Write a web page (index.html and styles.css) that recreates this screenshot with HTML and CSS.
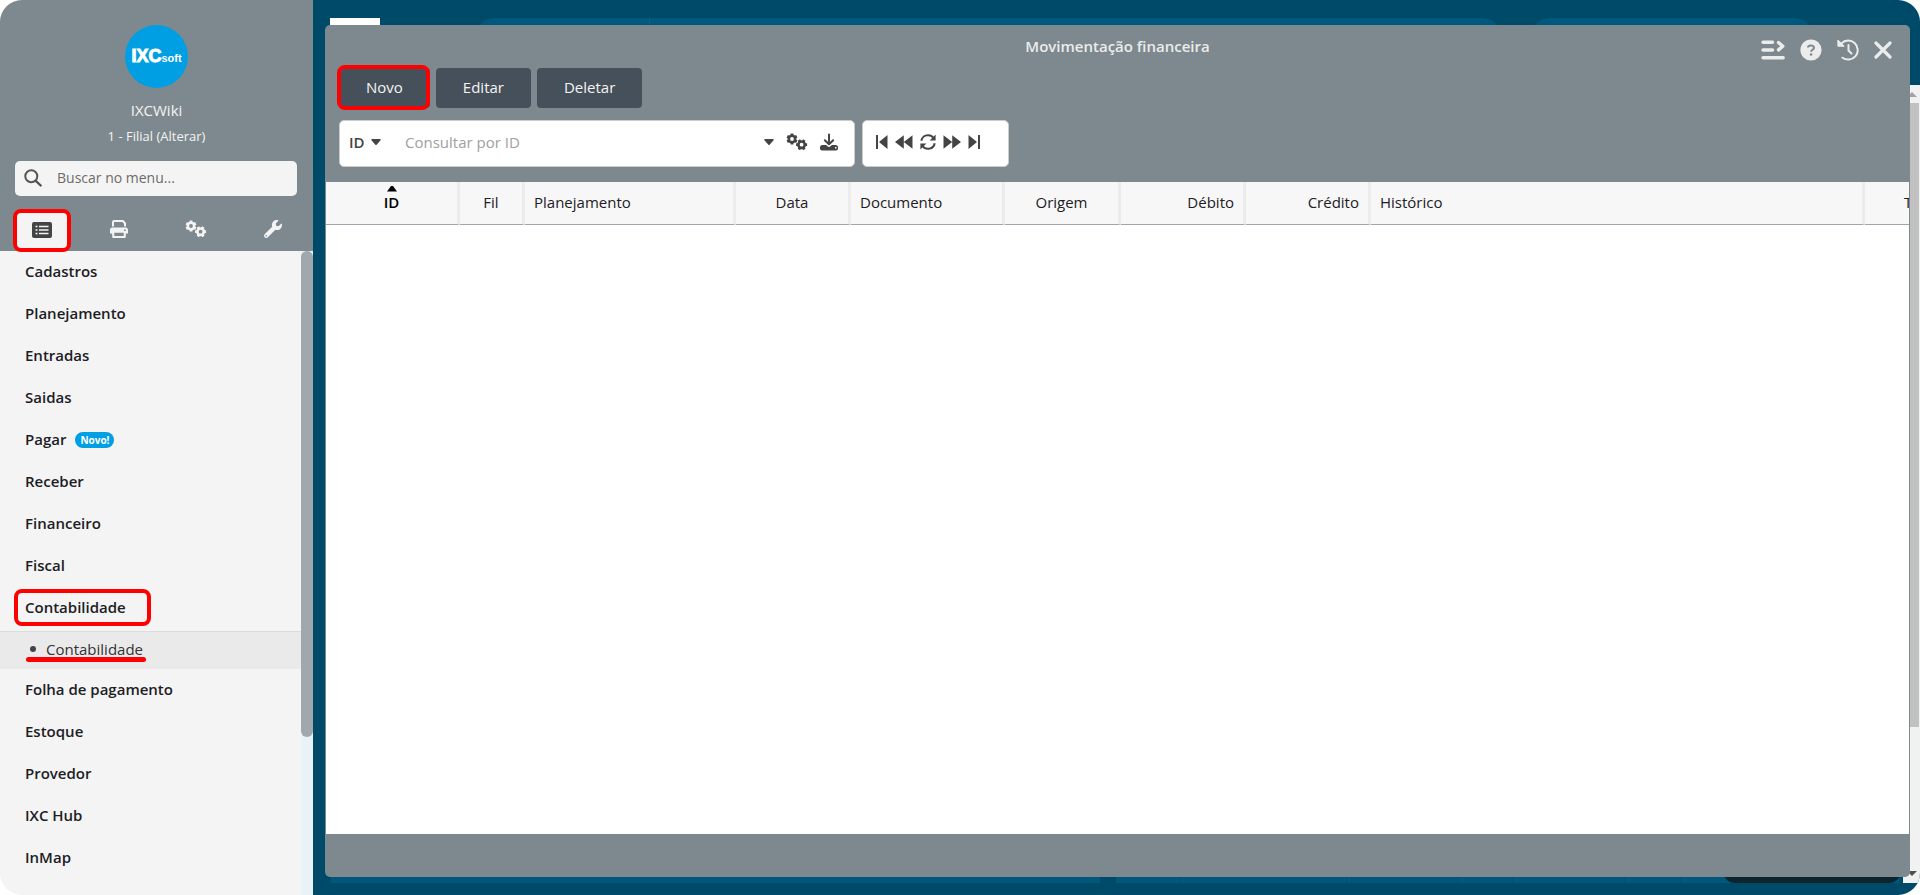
FILE: index.html
```html
<!DOCTYPE html>
<html lang="pt-BR">
<head>
<meta charset="utf-8">
<title>Movimentação financeira</title>
<link rel="stylesheet" href="styles.css">
</head>
<body>
<svg class="defs" aria-hidden="true">
  <symbol id="gears" viewBox="0 0 22 18">
    <g fill="none" stroke="currentColor">
      <circle cx="6" cy="6" r="3.2" stroke-width="2.6"/>
      <path stroke-width="2.8" d="M6 0.5v2M6 9.500v2M1.240 3.250l1.730 1M9.030 7.750l1.730 1M10.760 3.250l-1.730 1M2.970 7.750l-1.730 1"/>
      <circle cx="15.600" cy="11.700" r="3.200" stroke-width="2.6"/>
      <path stroke-width="2.8" d="M10.100 11.700h2M19.100 11.700h2M12.850 6.940l1 1.730M17.350 14.730l1 1.730M18.350 6.940l-1 1.730M13.850 14.730l-1 1.730"/>
    </g>
  </symbol>
  <symbol id="caret" viewBox="0 0 10 6"><path fill="currentColor" d="M1 0h8a.8.8 0 0 1 .6 1.300L5.600 5.700a.8.8 0 0 1-1.200 0L.4 1.300A.8.800 0 0 1 1 0z"/></symbol>
</svg>
<div class="app">
  <aside class="sidebar">
    <header class="profile">
      <div class="logo"><span class="logo-main">IXC</span><span class="logo-sub">soft</span></div>
      <div class="company">IXCWiki</div>
      <a class="branch" href="#">1 - Filial (Alterar)</a>
      <label class="menu-search">
        <svg class="icon-search" viewBox="0 0 18 18" fill="none" stroke="currentColor" stroke-linecap="round"><circle cx="7.300" cy="7.300" r="6" stroke-width="2"/><path d="M11.800 11.800l4.900 4.700" stroke-width="2.400"/></svg>
        <input type="text" placeholder="Buscar no menu..." aria-label="Buscar no menu">
      </label>
      <nav class="tabs">
        <button class="tab active" aria-label="Menu"><svg width="20" height="16" viewBox="0 0 20 16"><rect width="20" height="16" rx="2" fill="currentColor"/><path d="M3.500 4.500h2M3.500 8h2M3.500 11.500h2M7 4.500h9.500M7 8h9.500M7 11.500h9.500" stroke="#f4f4f4" stroke-width="1.600"/></svg></button>
        <button class="tab" aria-label="Imprimir"><svg width="18" height="18" viewBox="0 0 18 18"><path fill="none" stroke="currentColor" stroke-width="2" d="M3 6.500V2.200A1.200 1.200 0 0 1 4.200 1h8.600L15 3.200v3.300"/><path fill="currentColor" fill-rule="evenodd" d="M2.500 7.500h13A2.500 2.500 0 0 1 18 10v3.500h-2.200v3A1.300 1.300 0 0 1 14.500 18h-11a1.300 1.300 0 0 1-1.300-1.500v-3H0V10a2.500 2.500 0 0 1 2.500-2.500zM4.300 12.700v3.200h9.400v-3.200zM14 9.500v1.500h1.700V9.500z"/></svg></button>
        <button class="tab" aria-label="Configurações"><svg width="22" height="18"><use href="#gears"/></svg></button>
        <button class="tab" aria-label="Ferramentas"><svg width="18" height="18" viewBox="0 0 512 512"><path fill="currentColor" d="M507.700 109.100c-2.200-9-13.500-12.100-20.100-5.500l-74.400 74.400-67.900-11.300L334 98.900l74.400-74.400c6.600-6.600 3.400-17.900-5.700-20.200-47.400-11.700-99.600.9-136.600 37.900-39.600 39.600-50.500 97.100-34.100 147.200L18.700 402.800c-25 25-25 65.500 0 90.500s65.500 25 90.500 0l213.200-213.200c50.100 16.700 107.500 5.700 147.400-34.200 37.100-37.100 49.700-89.300 37.900-136.800zM64 472c-13.200 0-24-10.800-24-24s10.700-24 24-24 24 10.700 24 24-10.700 24-24 24z"/></svg></button>
      </nav>
    </header>
    <div class="menu-area">
      <ul class="menu">
        <li><a href="#">Cadastros</a></li>
        <li><a href="#">Planejamento</a></li>
        <li><a href="#">Entradas</a></li>
        <li><a href="#">Saidas</a></li>
        <li><a href="#">Pagar<span class="badge">Novo!</span></a></li>
        <li><a href="#">Receber</a></li>
        <li><a href="#">Financeiro</a></li>
        <li><a href="#">Fiscal</a></li>
        <li><a class="marked" href="#">Contabilidade</a>
          <ul class="submenu"><li><a href="#">Contabilidade</a></li></ul>
        </li>
        <li><a href="#">Folha de pagamento</a></li>
        <li><a href="#">Estoque</a></li>
        <li><a href="#">Provedor</a></li>
        <li><a href="#">IXC Hub</a></li>
        <li><a href="#">InMap</a></li>
      </ul>
      <div class="menu-scroll"><div class="menu-thumb"></div></div>
    </div>
  </aside>

  <main class="workspace">
    <div class="backdrop">
      <div class="back-top">
        <div class="back-logo"></div>
        <div class="back-pill wide"></div>
        <div class="back-pill"></div>
      </div>
      <div class="back-bottom">
        <div class="back-panel"></div>
        <div class="back-grid"><i></i><i></i><i></i><i></i><i></i><i></i><i></i></div>
      </div>
    </div>
    <div class="back-toast"></div>
    <div class="page-scroll">
      <svg width="10" height="5" viewBox="0 0 10 5"><path fill="#a3a3a3" d="M0 5l5-5 5 5z"/></svg>
      <div class="page-thumb"></div>
      <svg width="10" height="5" viewBox="0 0 10 5"><path fill="#505050" d="M0 0h10L5 5z"/></svg>
    </div>

    <section class="window">
      <header class="window-head">
        <div class="title-bar">
          <h1>Movimentação financeira</h1>
          <div class="window-actions">
            <button aria-label="Alternar"><svg width="24" height="20" viewBox="0 0 24 20" fill="none" stroke="currentColor" stroke-width="3.400" stroke-linecap="round" stroke-linejoin="round"><path d="M2 2.300h9.500M2 10h9.500M2 17.700h20.200M17.500 2.500l4.300 3.700-4.300 3.700"/></svg></button>
            <button aria-label="Ajuda"><svg width="22" height="22" viewBox="0 0 22 22"><circle cx="11" cy="11" r="10.600" fill="currentColor"/><path fill="none" stroke="#7d898e" stroke-width="2" d="M8 8.500C8 6 14 5.500 14 8.700c0 2-2.900 2-2.900 4"/><circle cx="11.100" cy="15.500" r="1.300" fill="#7d898e"/></svg></button>
            <button aria-label="Histórico"><svg width="22" height="22" viewBox="0 0 22 22"><path fill="none" stroke="currentColor" stroke-width="2" stroke-linecap="round" d="M4.500 4.400A9.500 9.500 0 1 1 5.500 18.700"/><path fill="currentColor" d="M.9 1v6.200h6.300z" stroke="currentColor" stroke-linejoin="round"/><path fill="none" stroke="currentColor" stroke-width="2" stroke-linecap="round" d="M11.500 6v5.500l3 3"/></svg></button>
            <button aria-label="Fechar"><svg width="18" height="18" viewBox="0 0 18 18"><path fill="none" stroke="currentColor" stroke-width="3.200" stroke-linecap="round" d="M2 2l14 14M16 2L2 16"/></svg></button>
          </div>
        </div>
        <div class="commands">
          <button class="marked">Novo</button>
          <button>Editar</button>
          <button>Deletar</button>
        </div>
        <div class="toolbar">
          <div class="query">
            <label class="field"><select aria-label="Campo"><option>ID</option></select><svg width="10" height="6"><use href="#caret"/></svg></label>
            <input type="text" placeholder="Consultar por ID" aria-label="Consultar por ID">
            <div class="query-actions">
              <button aria-label="Mais"><svg width="10" height="6"><use href="#caret"/></svg></button>
              <button aria-label="Configurar"><svg width="22" height="18"><use href="#gears"/></svg></button>
              <button aria-label="Exportar"><svg width="18" height="18" viewBox="0 0 18 18"><path fill="none" stroke="currentColor" stroke-width="2" stroke-linecap="round" stroke-linejoin="round" d="M9 1.500v9M4.800 7.200L9 11.300l4.200-4.100"/><path fill="currentColor" fill-rule="evenodd" d="M2.500 12H6l3 2.300 3-2.300h3.500a2.500 2.500 0 0 1 2.500 2.500v1a2 2 0 0 1-2 2H2a2 2 0 0 1-2-2v-1A2.500 2.500 0 0 1 2.500 12zM15 14v1.500h1.500V14z"/></svg></button>
            </div>
          </div>
          <div class="pager">
            <button aria-label="Primeiro"><svg width="12" height="14" viewBox="0 0 12 14" fill="currentColor"><path d="M0 0h2v14H0zM11.500 0v14L3 7z"/></svg></button>
            <button aria-label="Anterior"><svg width="18" height="14" viewBox="0 0 18 14" fill="currentColor"><path d="M8.800.3v13.400L0 7zM17.500.3v13.400L8.800 7z"/></svg></button>
            <button aria-label="Atualizar"><svg width="16" height="16" viewBox="0 0 16 16" fill="none" stroke="currentColor" stroke-width="2"><path d="M1.300 6.800A6.800 6.800 0 0 1 13.500 4M14.700 9.200A6.800 6.800 0 0 1 2.500 12"/><path stroke="none" fill="currentColor" d="M15.600.5v6h-6zM.4 15.500v-6h6z"/></svg></button>
            <button aria-label="Próximo"><svg width="18" height="14" viewBox="0 0 18 14" fill="currentColor"><path d="M.5.3v13.400L9.200 7zM9.200.3v13.400L18 7z"/></svg></button>
            <button aria-label="Último"><svg width="12" height="14" viewBox="0 0 12 14" fill="currentColor"><path d="M10 0h2v14h-2zM.5 0v14L9 7z"/></svg></button>
          </div>
        </div>
      </header>
      <div class="grid">
        <table>
          <colgroup><col class="c-id"><col class="c-fil"><col class="c-plan"><col class="c-data"><col class="c-doc"><col class="c-orig"><col class="c-val"><col class="c-val"><col><col class="c-last"></colgroup>
          <thead>
            <tr>
              <th class="center sorted"><svg class="sort" width="10" height="6" viewBox="0 0 10 6"><path d="M0 5.500L4 0h2l4 5.500z"/></svg>ID</th>
              <th class="center">Fil</th>
              <th>Planejamento</th>
              <th class="center">Data</th>
              <th>Documento</th>
              <th class="center">Origem</th>
              <th class="right">Débito</th>
              <th class="right">Crédito</th>
              <th>Histórico</th>
              <th class="cut">T</th>
            </tr>
          </thead>
        </table>
      </div>
      <footer class="window-foot"></footer>
    </section>
  </main>
</div>
</body>
</html>
```
FILE: styles.css
```css
*, *::before, *::after { box-sizing: border-box; }
body { margin: 0; background: #fff; color: #1c2024; font: 15px/20px "Open Sans", "Noto Sans", sans-serif; }
button, input, select { font: inherit; color: inherit; border: 0; padding: 0; margin: 0; background: none; outline: 0; }
button { cursor: pointer; display: flex; align-items: center; justify-content: center; }
a { color: inherit; text-decoration: none; }
ul { list-style: none; margin: 0; padding: 0; }
svg { display: block; flex: none; }
.defs { position: absolute; width: 0; height: 0; }

.app { display: flex; height: 100vh; border-radius: 22px; overflow: hidden; }

/* Sidebar */
.sidebar { width: 313px; flex: none; display: flex; flex-direction: column; background: #f4f4f4; }
.profile { background: #7d898e; color: #f4f4f4; padding: 25px 15px 0; display: flex; flex-direction: column; align-items: center; }
.logo { width: 63px; height: 63px; border-radius: 50%; background: #009fe3; color: #fff; display: flex; align-items: baseline; justify-content: center; font-family: "Liberation Sans", Arial, sans-serif; font-weight: 700; line-height: 63px; }
.logo-main { font-size: 18px; -webkit-text-stroke: 1px #fff; }
.logo-sub { font-size: 11px; }
.company { margin-top: 12px; }
.branch { margin-top: 6px; font-size: 13px; }
.menu-search { align-self: stretch; margin: 15px 1px 0 0; height: 35px; background: #f4f4f4; border-radius: 5px; display: flex; align-items: center; gap: 15px; padding: 0 9px 2px; color: #555; }
.icon-search { width: 18px; height: 18px; }
.menu-search input { flex: 1; min-width: 0; font-size: 14px; }
.menu-search input::placeholder { color: #6b6b6b; opacity: 1; }
.tabs { align-self: stretch; display: flex; gap: 19px; margin: 13px -2px 0; height: 42px; }
.tab { flex: none; width: 58px; height: 43px; padding-bottom: 3px; }
.tab.active { position: relative; z-index: 1; background: #f4f4f4; color: #444; border: 4px solid #f00; border-radius: 8px; padding: 0 0 2px; }

.menu-area { flex: 1; min-height: 0; display: flex; }
.menu { flex: 1; font-weight: 600; overflow: hidden; }
.menu > li > a { display: flex; align-items: center; height: 42px; padding: 0 25px 2px; }
.badge { margin: 2px 0 0 9px; padding: 0 5px; border-radius: 8px; background: #009fe3; color: #fff; font-size: 10px; font-weight: 700; line-height: 16px; }
.menu > li > a.marked { position: relative; }
.menu > li > a.marked::before { content: ""; position: absolute; left: 14px; top: 2px; width: 137px; height: 37px; border: 4px solid #f00; border-radius: 8px; }
.submenu { margin-top: 2px; background: #eaeaea; border-top: 1px solid #dcdcdc; font-weight: 400; }
.submenu a { position: relative; display: flex; align-items: center; gap: 10px; height: 37px; padding: 0 30px 3px; color: #333; }
.submenu a::before { content: ""; width: 6px; height: 6px; border-radius: 50%; background: #444; }
.submenu a::after { content: ""; position: absolute; left: 26px; top: 25px; width: 120px; height: 5px; border-radius: 3px; background: #f00; }
.menu-scroll { width: 12px; background: #e8f2f7; }
.menu-thumb { height: 75.5%; background: #a0a8ae; border-radius: 6px; }

/* Page behind the window */
.workspace { flex: 1; min-width: 0; position: relative; background: #004a69; }
.backdrop { height: 100%; display: flex; flex-direction: column; justify-content: space-between; padding: 18px 20px 12px 17px; }
.back-top { display: flex; height: 40px; padding-right: 86px; }
.back-logo { width: 50px; background: #fff; margin-right: 95px; }
.back-pill { flex: 283; border-radius: 20px; background: #00587d; }
.back-pill.wide { flex: 1025; margin-right: 28px; background: linear-gradient(90deg, #00587d 174px, #00638a 174px, #00638a 175px, #00587d 175px); }
.back-bottom { display: flex; gap: 16px; height: 20px; padding-left: 1px; }
.back-panel { flex: 769; background: #00587d; }
.back-grid { flex: 784; display: grid; grid-template-columns: 65fr 166fr 111fr 55fr 112fr 56fr 219fr; background: #00587d; }
.back-grid i { border-right: 1px solid #005073; }
.back-toast { position: absolute; right: 20px; bottom: 12px; width: 176px; height: 30px; border-radius: 10px; background: #0e252e; }
.page-scroll { position: absolute; right: 0; top: 85px; bottom: 12px; width: 17px; background: #f1f1f1; display: flex; flex-direction: column; align-items: center; padding: 7px 0; }
.page-thumb { width: 15px; height: 624px; margin: 6px 0 auto; background: #c1c1c1; }

/* Window */
.window { position: absolute; top: 25px; right: 10px; bottom: 18px; left: 12px; display: flex; flex-direction: column; background: #7d898e; border-radius: 5px; overflow: hidden; }
.window-head { padding: 10px 14px 15px; }
.title-bar { display: grid; grid-template-columns: 1fr auto 1fr; color: #ececec; height: 33px; }
.title-bar h1 { grid-column: 2; margin: 0; font-size: 15px; line-height: 22px; font-weight: 600; }
.window-actions { justify-self: end; display: flex; gap: 15px; align-items: center; height: 30px; padding-right: 4px; }
.commands { display: flex; gap: 6px; }
.commands button { height: 40px; padding: 0 27px 3px; border-radius: 4px; background: #46505a; color: #f4f4f4; font-weight: 500; position: relative; }
.commands .marked::before { content: ""; position: absolute; inset: -3px 0 -2px -2px; border: 4px solid #f00; border-radius: 8px; }
.toolbar { display: flex; gap: 7px; margin-top: 12px; }
.query, .pager { height: 47px; background: #fff; border: 1px solid #ccc; border-radius: 5px; display: flex; align-items: center; color: #444; }
.query { width: 516px; padding: 0 16px 3px 9px; }
.field { display: flex; align-items: center; gap: 7px; font-weight: 600; }
.field select { appearance: none; width: 15px; }
.query input { flex: 1; min-width: 0; margin-left: 24px; }
.query input::placeholder { color: #a0a0a0; opacity: 1; }
.query-actions { display: flex; gap: 12px; }
.pager { width: 147px; padding: 0 0 3px 13px; gap: 7px; }
.grid { flex: 1; margin: 0 1px; background: #fff; overflow: hidden; }
table { width: 100%; table-layout: fixed; border-collapse: separate; border-spacing: 0; }
th { position: relative; height: 43px; padding: 0 9px 3px; background: #f7f7f7; border-bottom: 1px solid #a0a5ad; border-right: 3px solid #ececec; font-weight: 500; text-align: left; }
th.center { text-align: center; }
th.right { text-align: right; }
th.sorted { font-weight: 600; color: #000; }
th.cut { padding: 0 0 3px 39px; border-right: 0; white-space: nowrap; }
.sort { position: absolute; top: 4px; left: calc(50% - 5px); }
.c-id { width: 134px; }
.c-fil { width: 65px; }
.c-plan { width: 211px; }
.c-data { width: 115px; }
.c-doc { width: 154px; }
.c-orig { width: 116px; }
.c-val { width: 125px; }
.c-last { width: 44px; }
.window-foot { height: 43px; }
```
